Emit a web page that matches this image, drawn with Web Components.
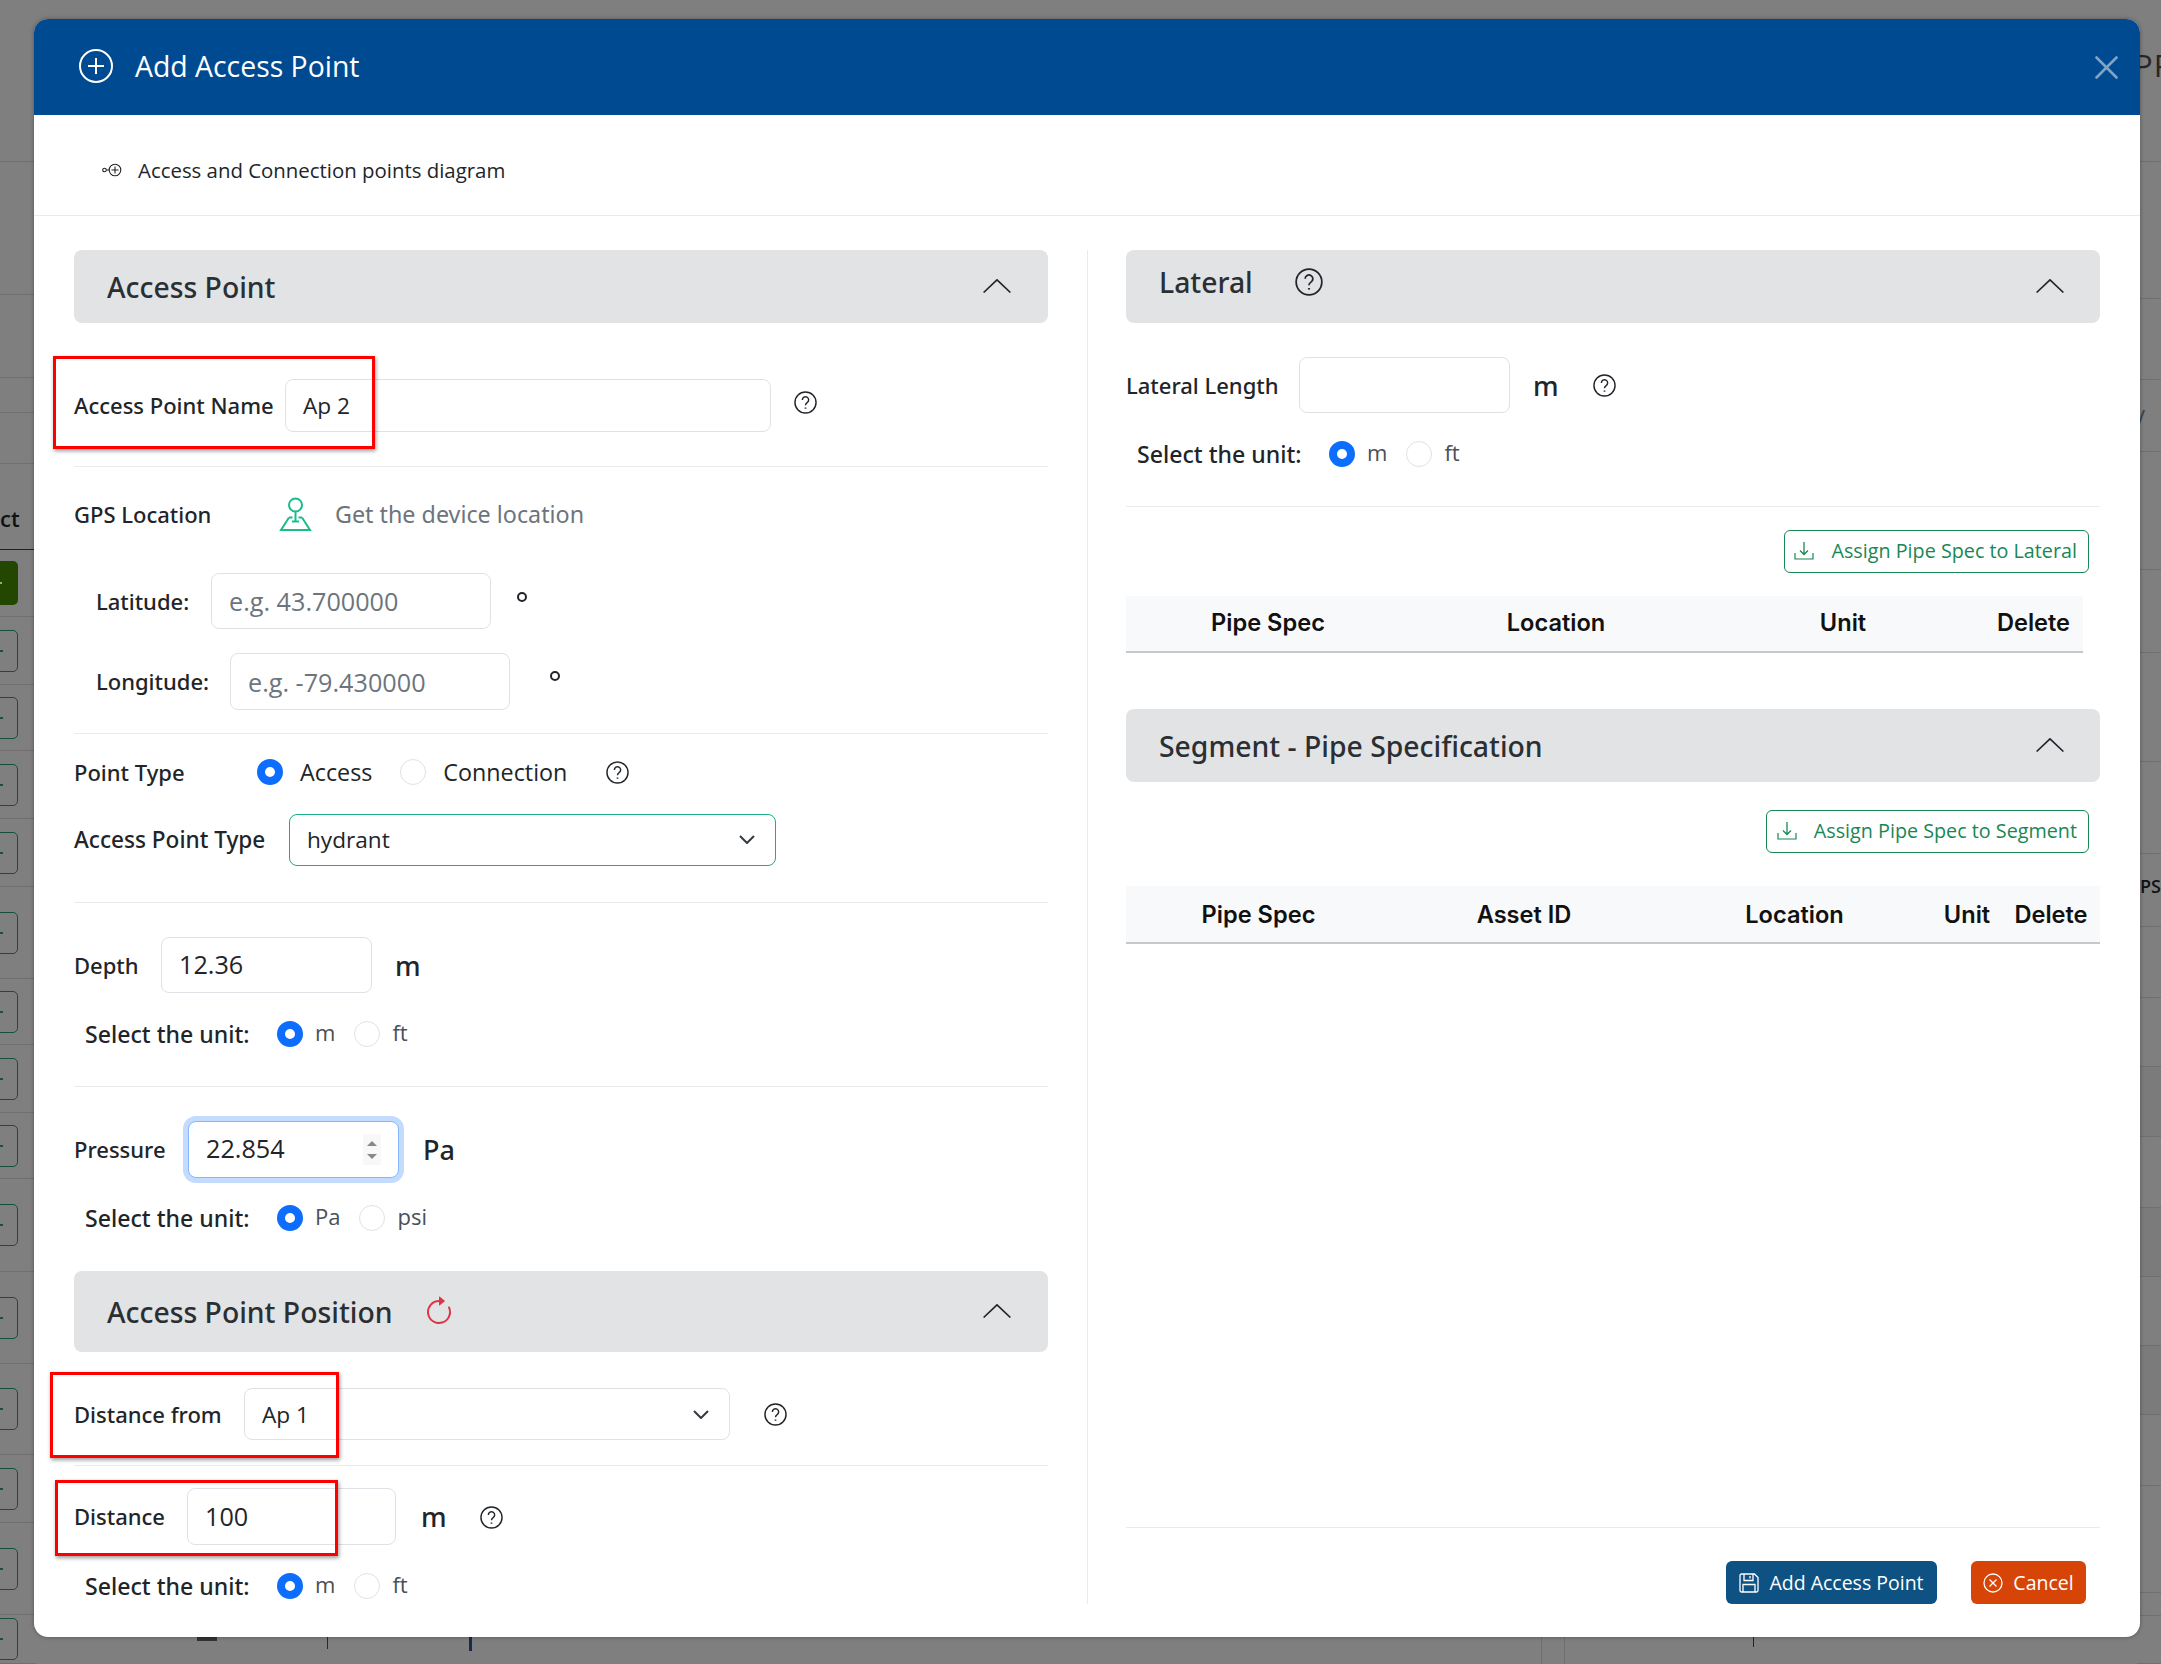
<!DOCTYPE html>
<html>
<head>
<meta charset="utf-8">
<title>Add Access Point</title>
<style>
  html, body { margin: 0; height: 100%; background: #7f7f7f; overflow: hidden; }
  body { font-family: "Open Sans", "Noto Sans", sans-serif; color: #212529; }
</style>
</head>
<body>
<ap-page>
  <ap-backdrop></ap-backdrop>
  <ap-dialog>
    <span slot="title">Add Access Point</span>
    <span slot="sub">Access and Connection points diagram</span>

    <div slot="left">
      <ap-section heading="Access Point" style="height:73px"></ap-section>

      <ap-row style="margin-top:56px;height:53px">
        <ap-label style="width:211px">Access Point Name</ap-label>
        <ap-input style="width:486px;font-size:22.700px">Ap 2</ap-input>
        <ap-help style="margin:-7px 0 0 23px"></ap-help>
      </ap-row>
      <ap-rule style="margin-top:34px"></ap-rule>

      <ap-row style="margin-top:27px;height:40px">
        <ap-label style="width:205px">GPS Location</ap-label>
        <ap-icon name="pin" style="width:33px;height:34px;color:#1abc8c"></ap-icon>
        <ap-label style="margin-left:23px;color:#6c757d;font-size:23.300px;font-weight:400">Get the device location</ap-label>
      </ap-row>
      <ap-row style="margin-top:39px;height:56px;padding-left:22px">
        <ap-label style="width:115px;margin-left:0">Latitude:</ap-label>
        <ap-input placeholder style="width:280px">e.g. 43.700000</ap-input>
        <ap-degree style="margin-left:26px;margin-top:-8px"></ap-degree>
      </ap-row>
      <ap-row style="margin-top:24px;height:57px;padding-left:22px">
        <ap-label style="width:134px;margin-left:0">Longitude:</ap-label>
        <ap-input placeholder style="width:280px">e.g. -79.430000</ap-input>
        <ap-degree style="margin-left:40px;margin-top:-12px"></ap-degree>
      </ap-row>
      <ap-rule style="margin-top:23px"></ap-rule>

      <ap-row style="margin-top:23px;height:30px">
        <ap-label style="width:183px">Point Type</ap-label>
        <ap-radio checked style="font-size:23.300px">Access</ap-radio>
        <ap-radio style="margin-left:28px;font-size:23.300px">Connection</ap-radio>
        <ap-help style="margin-left:39px"></ap-help>
      </ap-row>
      <ap-row style="margin-top:27px;height:52px">
        <ap-label style="width:215px;font-size:22.600px">Access Point Type</ap-label>
        <ap-select accent style="width:487px;padding-bottom:2px">hydrant</ap-select>
      </ap-row>
      <ap-rule style="margin-top:36px"></ap-rule>

      <ap-row style="margin-top:34px;height:56px">
        <ap-label style="width:87px">Depth</ap-label>
        <ap-input style="width:211px;padding-bottom:3px">12.36</ap-input>
        <ap-measure style="margin-left:23px">m</ap-measure>
      </ap-row>
      <ap-unit-picker first="m" second="ft" style="margin-top:26px"></ap-unit-picker>
      <ap-rule style="margin-top:37px"></ap-rule>

      <ap-row style="margin-top:34px;height:57px">
        <ap-label style="width:114px">Pressure</ap-label>
        <ap-input focused spinner style="width:211px;padding-bottom:3px">22.854</ap-input>
        <ap-measure style="margin-left:24px">Pa</ap-measure>
      </ap-row>
      <ap-unit-picker first="Pa" second="psi" style="margin-top:25px"></ap-unit-picker>

      <ap-section heading="Access Point Position" style="margin-top:38px;height:81px">
        <ap-icon slot="extra" name="refresh" style="width:32px;height:32px;color:#dc3545;margin-left:31px"></ap-icon>
      </ap-section>
      <ap-row style="margin-top:36px;height:52px">
        <ap-label style="width:170px">Distance from</ap-label>
        <ap-select style="width:486px;font-size:22.700px">Ap 1</ap-select>
        <ap-help style="margin-left:34px"></ap-help>
      </ap-row>
      <ap-rule style="margin-top:25px"></ap-rule>
      <ap-row style="margin-top:22px;height:57px">
        <ap-label style="width:113px">Distance</ap-label>
        <ap-input style="width:209px;padding-bottom:1px">100</ap-input>
        <ap-measure style="margin-left:25px">m</ap-measure>
        <ap-help style="margin:2px 0 0 33px"></ap-help>
      </ap-row>
      <ap-unit-picker first="m" second="ft" style="margin-top:26px"></ap-unit-picker>
    </div>

    <div slot="right" style="display:flex;flex-direction:column;height:100%">
      <ap-section heading="Lateral" raised style="height:73px;padding-right:36px">
        <ap-help slot="extra" large style="margin-left:42px"></ap-help>
      </ap-section>
      <ap-row style="margin-top:34px;height:56px">
        <ap-label style="width:173px">Lateral Length</ap-label>
        <ap-input style="width:211px"></ap-input>
        <ap-measure style="margin-left:23px">m</ap-measure>
        <ap-help style="margin-left:34px"></ap-help>
      </ap-row>
      <ap-unit-picker first="m" second="ft" style="margin-top:26px"></ap-unit-picker>
      <ap-rule style="margin-top:37px"></ap-rule>
      <ap-assign style="margin-top:23px;margin-right:11px;width:305px">Assign Pipe Spec to Lateral</ap-assign>
      <ap-grid-head cols="284px 292px 282px 99px" style="margin-top:23px;width:957px;padding-bottom:2px">
        <span>Pipe Spec</span><span>Location</span><span>Unit</span><span>Delete</span>
      </ap-grid-head>

      <ap-section heading="Segment - Pipe Specification" style="margin-top:56px;height:73px;padding-right:36px"></ap-section>
      <ap-assign style="margin-top:28px;margin-right:11px;width:323px">Assign Pipe Spec to Segment</ap-assign>
      <ap-grid-head cols="265px 266px 275px 70px 98px" style="margin-top:33px;height:58px">
        <span>Pipe Spec</span><span>Asset ID</span><span>Location</span><span>Unit</span><span>Delete</span>
      </ap-grid-head>

      <ap-rule style="margin-top:auto"></ap-rule>
      <ap-row style="margin-top:33px;height:43px;justify-content:flex-end;padding-right:14px">
        <ap-action icon="save" style="background:#0d5282;width:211px">Add Access Point</ap-action>
        <ap-action icon="cancel" style="background:#d64507;width:115px;margin-left:34px">Cancel</ap-action>
      </ap-row>
    </div>
  </ap-dialog>

  <ap-mark style="left:53px;top:356px;width:322px;height:93px"></ap-mark>
  <ap-mark style="left:50px;top:1372px;width:289px;height:86px"></ap-mark>
  <ap-mark style="left:55px;top:1480px;width:283px;height:76px"></ap-mark>
</ap-page>

<script>
  const ICONS = {
    pin: '<svg viewBox="0 0 33 34" fill="none" stroke="currentColor" stroke-width="2"><circle cx="16.500" cy="8" r="6.500"/><path d="M16.500 14.500V24"/><path d="M10 20.500H13.500M23 20.500H19.500M10 20.500 2 33H31L23 20.500"/><path d="M13 24.500h7"/></svg>',
    refresh: '<svg viewBox="0 0 16 16" fill="currentColor"><path fill-rule="evenodd" d="M8 3a5 5 0 1 0 4.546 2.914.5.5 0 0 1 .908-.417A6 6 0 1 1 8 2z"/><path d="M8 4.466V.534a.25.25 0 0 1 .41-.192l2.36 1.966c.12.1.12.284 0 .384L8.41 4.658A.25.25 0 0 1 8 4.466"/></svg>',
    plus: '<svg viewBox="0 0 34 34" fill="none" stroke="currentColor" stroke-width="2"><circle cx="17" cy="17" r="16"/><path d="M17 9v16M9 17h16"/></svg>',
    close: '<svg viewBox="0 0 23 23" fill="none" stroke="currentColor" stroke-width="2.600" stroke-linecap="round"><path d="M1.500 1.500l20 20M21.500 1.500l-20 20"/></svg>',
    diagram: '<svg viewBox="0 0 20 14" fill="none" stroke="currentColor" stroke-width="1.100"><circle cx="2.500" cy="7" r="1.800"/><path d="M4.300 7h3.200"/><circle cx="13" cy="7" r="5.800"/><path d="M13 3.500v7M9.500 7h7"/></svg>',
    save: '<svg viewBox="0 0 20 20" fill="none" stroke="currentColor" stroke-width="1.300"><path d="M1 2.500A1.500 1.500 0 0 1 2.500 1H15.500L19 4.500V17.500A1.500 1.500 0 0 1 17.500 19H2.500A1.500 1.500 0 0 1 1 17.500Z"/><path d="M5 1V7.500H14V1M11 3v2.500"/><path d="M4 19V11.500H16V19"/></svg>',
    cancel: '<svg viewBox="0 0 20 20" fill="none" stroke="currentColor" stroke-width="1.300"><circle cx="10" cy="10" r="9"/><path d="M6.500 6.500l7 7M13.500 6.500l-7 7"/></svg>',
    download: '<svg viewBox="0 0 20 20" fill="none" stroke="currentColor" stroke-width="1.300"><path d="M10 1V13M6 9.500l4 4 4-4"/><path d="M1 12v6h18v-6" stroke-width="1.200"/></svg>'
  };

  // small base so every element below only has to give its styles and markup
  class ApElement extends HTMLElement {
    constructor() {
      super();
      this.attachShadow({mode: 'open'});
    }
    connectedCallback() {
      this.shadowRoot.innerHTML = '<style>' + this.styles() + '</style>' + this.markup();
    }
    styles() { return ':host{display:block}'; }
    markup() { return '<slot></slot>'; }
  }

  class ApPage extends ApElement {
    styles() { return ':host{display:block;position:relative;width:2161px;height:1664px;overflow:hidden}'; }
  }

  class ApBackdrop extends ApElement {
    static get leftLines() {
      return [162, 295, 378, 413, 464, 550, 617, 685, 751, 819, 887, 979, 1045, 1113, 1179, 1272, 1364, 1455, 1523, 1615, 1664];
    }
    static get rightLines() {
      return [162, 299, 380, 452, 570, 653, 762, 854, 927, 998, 1067, 1137, 1208, 1277, 1346, 1415, 1486, 1593, 1616, 1664];
    }
    strip(lines, boxes) {
      let prev = 0;
      return lines.map((y, i) => {
        let h = y - prev;
        prev = y;
        let cls = y === 550 ? 'black' : '';
        if (!boxes && (y === 1137 || y === 1277 || y === 1415)) cls = 'shade';
        let box = boxes && i > 5 ? '<i class="' + (i === 6 ? 'on' : '') + '"><u></u></i>' : '';
        let note = y === 550 ? '<b>ct</b>' : '';
        return '<div class="' + cls + '" style="height:' + h + 'px">' + box + note + '</div>';
      }).join('');
    }
    styles() {
      return `
        :host{position:absolute;inset:0;display:flex;justify-content:space-between;background:#7f7f7f;
          font-family:"Open Sans",sans-serif}
        .strip{width:36px;display:flex;flex-direction:column}
        .strip.right{width:24px}
        .strip div{box-sizing:border-box;border-bottom:1px solid #6f6f6f;position:relative;display:flex;align-items:center}
        .strip div.black{border-bottom:1px solid #222;align-items:flex-end;padding-bottom:20px}
        .strip div.shade{background:#7b7b7b}
        .strip.left i{display:flex;align-items:center;width:19px;height:42px;margin-left:-1px;box-sizing:border-box;
          border:1.500px solid #17503a;border-radius:0 5px 5px 0}
        .strip.left i.on{background:#234700;height:44px;border:0}
        u{display:block;width:3px;height:2px;background:#1d4f3d}
        i.on u{background:#9aa58a}
        b{font-weight:600;font-size:22px;line-height:1;color:#111}
        .note{position:absolute;font-size:22px;font-weight:600;color:#111;white-space:nowrap}
        .bit{position:absolute;display:block;background:#222}
        .v{position:absolute;display:block;width:1px;top:1637px;bottom:0;background:#6f6f6f}
      `;
    }
    markup() {
      return '<div class="strip left">' + this.strip(ApBackdrop.leftLines, true) + '</div>' +
        '<div class="strip right">' + this.strip(ApBackdrop.rightLines, false) + '</div>' +
        '<span class="note" style="left:2134px;top:44px;color:#262626;font-weight:400;font-size:31px;letter-spacing:1px">PP</span>' +
        '<span class="note" style="left:2133px;top:397px;color:#3a4656;font-weight:400;font-size:24px">y</span>' +
        '<span class="note" style="left:2140px;top:874px;font-size:18px">PS</span>' +
        '<span class="bit" style="left:197px;top:1637px;width:20px;height:4px;background:#333"></span>' +
        '<span class="bit" style="left:327px;top:1637px;width:1px;height:12px;background:#1a2a4a"></span>' +
        '<span class="bit" style="left:469px;top:1637px;width:3px;height:14px;background:#1a2a4a"></span>' +
        '<span class="bit" style="left:1753px;top:1637px;width:1px;height:10px"></span>' +
        '<span class="v" style="left:1541px"></span><span class="v" style="left:1564px"></span>';
    }
  }

  class ApDialog extends ApElement {
    styles() {
      return `
        :host{position:absolute;left:34px;top:19px;width:2106px;height:1618px;box-sizing:border-box;background:#fff;
          border-radius:14px;overflow:hidden;display:flex;flex-direction:column;box-shadow:0 0 4px rgba(0,0,0,.35)}
        header{height:96px;box-sizing:border-box;padding:0 22px 2px 45px;background:#004a91;color:#fff;display:flex;align-items:center;flex:none;
          font-size:28.400px}
        .plus{width:34px;height:34px;margin-right:22px}
        .close{margin:2px 0 0 auto;width:23px;height:23px;color:#7fa4c8}
        .sub{height:101px;box-sizing:border-box;padding:10px 0 0 68px;border-bottom:1px solid #e9ecef;display:flex;align-items:center;font-size:20.400px;flex:none}
        .sub ap-icon{width:20px;height:14px;margin-right:16px}
        .body{flex:1;display:flex;padding:34px 40px 33px 40px;min-height:0}
        .col{width:974px;padding-right:39px;border-right:1px solid #e9ecef;flex:none}
        .col.r{flex:1;width:auto;border:0;padding:0 0 0 38px;min-width:0}
      `;
    }
    markup() {
      return `
        <header><ap-icon class="plus" name="plus"></ap-icon><slot name="title"></slot><ap-icon class="close" name="close"></ap-icon></header>
        <div class="sub"><ap-icon name="diagram"></ap-icon><slot name="sub"></slot></div>
        <div class="body">
          <div class="col"><slot name="left"></slot></div>
          <div class="col r"><slot name="right"></slot></div>
        </div>`;
    }
  }

  class ApSection extends ApElement {
    styles() {
      return `
        :host{display:flex;align-items:center;background:#e1e3e5;border-radius:8px;padding:0 37px 0 33px;flex:none;
          font-family:"Noto Sans","Open Sans",sans-serif;font-size:28.350px;color:#2b2f33;font-weight:500}
        h2{all:unset}
        .t{display:flex;align-items:center}
        :host([raised]) .t{margin-top:-10px}
        svg{margin-left:auto;width:28px;height:14px;margin-top:-2px}
      `;
    }
    markup() {
      return '<div class="t"><h2>' + this.getAttribute('heading') + '</h2><slot name="extra"></slot></div>' +
        '<svg viewBox="0 0 28 14" fill="none" stroke="#212529" stroke-width="1.600"><path d="M0.600 13.500 14 0.800 27.400 13.500"/></svg>';
    }
  }

  class ApRow extends ApElement {
    styles() { return ':host{display:flex;align-items:center;flex:none}'; }
  }

  class ApRule extends ApElement {
    styles() { return ':host{display:block;height:1px;background:#e9ecef;flex:none}'; }
    markup() { return ''; }
  }

  class ApLabel extends ApElement {
    styles() {
      return ':host{display:block;flex:none;font-family:"Noto Sans","Open Sans",sans-serif;font-size:22px;font-weight:500;white-space:nowrap;margin-top:-1px}';
    }
  }

  class ApMeasure extends ApElement {
    styles() { return ':host{display:block;font-family:"Noto Sans","Open Sans",sans-serif;font-size:27px;font-weight:500;line-height:1}'; }
  }

  class ApDegree extends ApElement {
    styles() { return ':host{display:block;width:10px;height:10px;box-sizing:border-box;border:2px solid #212529;border-radius:50%}'; }
    markup() { return ''; }
  }

  class ApInput extends ApElement {
    styles() {
      return `
        :host{display:flex;align-items:center;height:100%;box-sizing:border-box;border:1px solid #dee2e6;border-radius:8px;
          padding:0 17px;font-size:25.200px;color:#212529;background:#fff;flex:none;position:relative;white-space:nowrap}
        :host([placeholder]){color:#6c757d}
        :host([focused]){border-color:#86b7fe;box-shadow:0 0 0 5px #c2dbfe}
        .spin{position:absolute;right:17px;top:12px;bottom:12px;width:18px;background:#f8f8f8;display:flex;flex-direction:column;
          align-items:center;justify-content:center;gap:8px}
        .spin i{display:block;width:0;height:0;border-left:5px solid transparent;border-right:5px solid transparent}
        .up{border-bottom:5px solid #888}
        .dn{border-top:5px solid #888}
      `;
    }
    markup() {
      let spin = this.hasAttribute('spinner') ? '<div class="spin"><i class="up"></i><i class="dn"></i></div>' : '';
      return '<slot></slot>' + spin;
    }
  }

  class ApSelect extends ApElement {
    styles() {
      return `
        :host{display:flex;align-items:center;height:100%;box-sizing:border-box;border:1px solid #dee2e6;border-radius:8px;
          padding:0 20px 0 17px;font-size:24px;flex:none;background:#fff}
        :host([accent]){border-color:#1aae86;font-size:22.600px}
        svg{margin-left:auto;width:16px;height:9px}
      `;
    }
    markup() {
      return '<slot></slot><svg viewBox="0 0 16 9" fill="none" stroke="#343a40" stroke-width="2"><path d="M1 1l7 7 7-7"/></svg>';
    }
  }

  class ApRadio extends ApElement {
    styles() {
      return `
        :host{display:inline-flex;align-items:center;font-size:22px;flex:none;white-space:nowrap}
        i{display:block;width:26px;height:26px;box-sizing:border-box;border:1px solid #dee2e6;border-radius:50%;background:#fff;margin-right:var(--radio-gap,17px)}
        :host([checked]) i{border:8px solid #0d6efd}
        span{display:block;margin-top:var(--radio-shift,0)}
      `;
    }
    markup() { return '<i></i><span><slot></slot></span>'; }
  }

  class ApUnitPicker extends ApElement {
    styles() {
      return `
        :host{display:flex;align-items:center;height:30px;padding-left:11px;flex:none}
        ap-label{width:192px;font-size:23.100px;margin-top:0}
        ap-radio{margin-right:19px;color:#495057;--radio-gap:12px;--radio-shift:-5px}
      `;
    }
    markup() {
      return '<ap-label>Select the unit:</ap-label>' +
        '<ap-radio checked>' + this.getAttribute('first') + '</ap-radio>' +
        '<ap-radio>' + this.getAttribute('second') + '</ap-radio>';
    }
  }

  class ApHelp extends ApElement {
    styles() {
      return `
        :host{display:block;width:23px;height:23px;flex:none}
        :host([large]){width:28px;height:28px}
        svg{display:block;width:100%;height:100%}
      `;
    }
    markup() {
      return '<svg viewBox="0 0 24 24" fill="none" stroke="#212529" stroke-width="1.500"><circle cx="12" cy="12" r="11"/>' +
        '<path d="M8.700 9.300a3.300 3.300 0 1 1 5 2.800c-1.100.7-1.700 1.300-1.700 2.700"/><path d="M12 17.200v1.300" stroke-width="1.800"/></svg>';
    }
  }

  class ApIcon extends ApElement {
    styles() { return ':host{display:block;flex:none}svg{display:block;width:100%;height:100%}'; }
    markup() { return ICONS[this.getAttribute('name')]; }
  }

  class ApAssign extends ApElement {
    styles() {
      return `
        :host{display:flex;align-items:center;justify-content:flex-end;align-self:flex-end;height:43px;box-sizing:border-box;
          border:1.500px solid #198754;border-radius:6px;color:#198754;font-size:19.750px;padding:0 11px 2px 0;flex:none;white-space:nowrap}
        ap-icon{width:20px;height:20px;margin-right:17px}
      `;
    }
    markup() { return '<ap-icon name="download"></ap-icon><slot></slot>'; }
  }

  class ApGridHead extends ApElement {
    styles() {
      return `
        :host{display:grid;grid-template-columns:${this.getAttribute('cols')};align-items:center;justify-items:center;height:57px;
          box-sizing:border-box;background:#f8f9fa;border-bottom:2px solid #c6c8ca;flex:none;
          font:600 23.600px Inter,"Open Sans",sans-serif;color:#111}
      `;
    }
  }

  class ApAction extends ApElement {
    styles() {
      return `
        :host{display:flex;align-items:center;justify-content:center;height:43px;box-sizing:border-box;border-radius:6px;color:#fff;
          font-size:19.500px;flex:none;white-space:nowrap}
        ap-icon{width:20px;height:20px;margin-right:10px}
      `;
    }
    markup() { return '<ap-icon name="' + this.getAttribute('icon') + '"></ap-icon><slot></slot>'; }
  }

  // red annotation drawn over the form
  class ApMark extends ApElement {
    styles() {
      return ':host{position:absolute;box-sizing:border-box;border:3px solid #f00;box-shadow:1px 2px 4px rgba(0,0,0,.4);pointer-events:none}';
    }
    markup() { return ''; }
  }

  customElements.define('ap-page', ApPage);
  customElements.define('ap-backdrop', ApBackdrop);
  customElements.define('ap-dialog', ApDialog);
  customElements.define('ap-section', ApSection);
  customElements.define('ap-row', ApRow);
  customElements.define('ap-rule', ApRule);
  customElements.define('ap-label', ApLabel);
  customElements.define('ap-measure', ApMeasure);
  customElements.define('ap-degree', ApDegree);
  customElements.define('ap-input', ApInput);
  customElements.define('ap-select', ApSelect);
  customElements.define('ap-radio', ApRadio);
  customElements.define('ap-unit-picker', ApUnitPicker);
  customElements.define('ap-help', ApHelp);
  customElements.define('ap-icon', ApIcon);
  customElements.define('ap-assign', ApAssign);
  customElements.define('ap-grid-head', ApGridHead);
  customElements.define('ap-action', ApAction);
  customElements.define('ap-mark', ApMark);
</script>
</body>
</html>
